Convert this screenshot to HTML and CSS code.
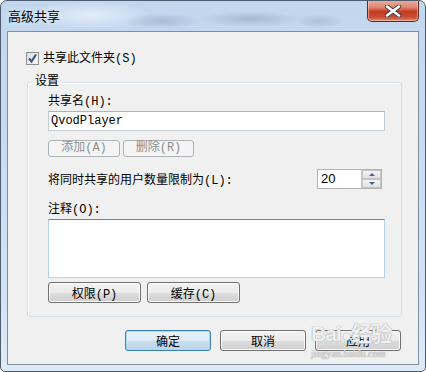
FILE: index.html
```html
<!DOCTYPE html>
<html lang="zh-CN">

<head>
    <meta charset="UTF-8">
    <meta name="viewport" content="width=device-width, initial-scale=1.0">
    <title>高级共享</title>
    <link rel="stylesheet" href="styles.css">
</head>

<body>
    <div class="window">
        <div class="titlebar">
            <span class="title">高级共享</span>
            <button class="close-btn">
                <svg width="22" height="12" viewBox="0 0 22 12">
                    <path d="M5 1.5 L17 10.5 M17 1.5 L5 10.5" stroke="#3b3f47" stroke-width="4.4" stroke-linecap="round" />
                    <path d="M5 1.5 L17 10.5 M17 1.5 L5 10.5" stroke="#ffffff" stroke-width="2.6" stroke-linecap="round" />
                </svg>
            </button>
        </div>

        <div class="content">
            <div class="check-row">
                <span class="checkbox">
                    <svg width="11" height="11" viewBox="0 0 11 11">
                        <path d="M2 5.5 L4.5 8.5 L9 1.5" fill="none" stroke="#3a4f8c" stroke-width="2" />
                    </svg>
                </span>
                <span class="check-label">共享此文件夹(S)</span>
            </div>

            <fieldset class="group">
                <legend>设置</legend>
                <div class="field-label">共享名(H):</div>
                <div class="textbox">QvodPlayer</div>
                <div class="btn-row">
                    <button class="btn btn-small disabled">添加(A)</button>
                    <button class="btn btn-small disabled">删除(R)</button>
                </div>
                <div class="limit-row">
                    <span>将同时共享的用户数量限制为(L):</span>
                    <div class="spin">
                        <span class="spin-value">20</span>
                        <div class="spin-btns">
                            <span class="spin-btn"><i class="arrow-up"></i></span>
                            <span class="spin-btn"><i class="arrow-down"></i></span>
                        </div>
                    </div>
                </div>
                <div class="field-label note-label">注释(O):</div>
                <div class="textarea"></div>
                <div class="btn-row wide">
                    <button class="btn btn-mid">权限(P)</button>
                    <button class="btn btn-mid">缓存(C)</button>
                </div>
            </fieldset>

            <div class="dialog-btns">
                <button class="btn btn-dialog default">确定</button>
                <button class="btn btn-dialog">取消</button>
                <button class="btn btn-dialog">应用</button>
            </div>
        </div>

        <!-- baidu watermark over the corner -->
        <div class="watermark">
            <div class="wm-main">Bai<span class="wm-paw">&#9679;</span>经验</div>
            <div class="wm-url">jingyan.baidu.com</div>
        </div>
    </div>
</body>

</html>
```

FILE: styles.css
```css
body {
    margin: 0;
    background: #ffffff;
    font-family: "Liberation Mono", "Noto Sans CJK SC", monospace;
    font-size: 12px;
    color: #000;
}

.window {
    position: relative;
    width: 426px;
    height: 372px;
    box-sizing: border-box;
    border: 1px solid #4d5c6e;
    border-radius: 7px 7px 5px 5px;
    overflow: hidden;
    background:
        radial-gradient(ellipse 60px 14px at 90px 14px, rgba(255, 255, 255, 0.55), transparent),
        radial-gradient(ellipse 40px 8px at 160px 20px, rgba(120, 140, 170, 0.35), transparent),
        radial-gradient(ellipse 50px 8px at 250px 18px, rgba(110, 125, 150, 0.35), transparent),
        radial-gradient(ellipse 25px 7px at 318px 20px, rgba(120, 135, 160, 0.3), transparent),
        linear-gradient(180deg, #c2d7ee 0%, #c8dbf0 40%, #d3e3f4 80%, #dfeaf7 100%);
}

.titlebar {
    display: flex;
    align-items: flex-start;
    height: 30px;
    padding-left: 7px;
}

.title {
    font-family: "Noto Sans CJK SC", sans-serif;
    font-size: 13px;
    line-height: 14px;
    margin-top: 8px;
    color: #000;
    text-shadow: 0 0 6px rgba(255, 255, 255, 0.9);
}

.close-btn {
    margin-left: auto;
    margin-right: 6px;
    margin-top: -1px;
    width: 52px;
    height: 22px;
    padding: 0;
    border: 1px solid #5d2a22;
    border-top: none;
    border-radius: 0 0 5px 5px;
    background: linear-gradient(180deg, #eab2a4 0%, #dc8670 35%, #c63b22 55%, #c84a30 80%, #dd8a72 100%);
    box-shadow: inset 0 0 0 1px rgba(255, 220, 210, 0.5);
    display: flex;
    align-items: center;
    justify-content: center;
}

.content {
    margin: 0 6px;
    height: 334px;
    box-sizing: border-box;
    border: 1px solid #7d8ea3;
    background: #f0f0f0;
    padding: 20px 16px 0 18px;
}

.check-row {
    display: flex;
    align-items: center;
    height: 13px;
}

.checkbox {
    width: 11px;
    height: 11px;
    border: 1px solid #8e8f8f;
    background: linear-gradient(135deg, #dcdcdc, #f8f8f8);
    display: flex;
    align-items: center;
    justify-content: center;
}

.check-label {
    margin-left: 4px;
    line-height: 14px;
}

.group {
    margin: 10px 0 0 1px;
    padding: 6px 16px 13px 20px;
    border: 1px solid #d5dfe5;
    border-radius: 3px;
    box-shadow: inset 1px 1px 0 #fff;
    min-width: 0;
}

.group legend {
    margin-left: -15px;
    padding: 0 2px;
    line-height: 14px;
}

.field-label {
    line-height: 14px;
}

.textbox {
    margin-top: 2px;
    height: 20px;
    box-sizing: border-box;
    border: 1px solid #c2cbd6;
    border-top-color: #abb3bd;
    background: #fff;
    padding-left: 2px;
    line-height: 18px;
}

.btn-row {
    display: flex;
    gap: 3px;
    margin-top: 9px;
}

.btn-row.wide {
    gap: 6px;
    margin-top: 4px;
}

.btn {
    padding: 0;
    font-family: "Liberation Mono", "Noto Sans CJK SC", monospace;
    font-size: 12px;
    color: #000;
    border: 1px solid #707070;
    border-radius: 3px;
    background: linear-gradient(180deg, #f2f2f2 0%, #ebebeb 50%, #dddddd 51%, #cfcfcf 100%);
    box-shadow: inset 0 0 0 1px #fbfbfb;
}

.btn.disabled {
    color: #8f8f8f;
    border-color: #adb2b5;
    background: #f4f4f4;
    box-shadow: none;
}

.btn-small {
    width: 72px;
    height: 17px;
    line-height: 15px;
}

.btn-small + .btn-small {
    width: 71px;
}

.btn-mid {
    width: 93px;
    height: 21px;
}

.limit-row {
    display: flex;
    align-items: center;
    justify-content: space-between;
    margin-top: 12px;
    height: 20px;
    padding-right: 3px;
}

.spin {
    display: flex;
    width: 65px;
    height: 20px;
    box-sizing: border-box;
    border: 1px solid #b4b4b4;
    background: #fff;
}

.spin-value {
    flex: 1;
    padding-left: 3px;
    line-height: 18px;
    font-family: "Liberation Sans", sans-serif;
    font-size: 13px;
}

.spin-btns {
    width: 19px;
    display: flex;
    flex-direction: column;
    border-left: 1px solid #c8c8c8;
}

.spin-btn {
    flex: 1;
    display: flex;
    align-items: center;
    justify-content: center;
    background: linear-gradient(180deg, #f4f4f4, #e2e2e2);
    border: 1px solid #c4c4c4;
}

.arrow-up,
.arrow-down {
    width: 0;
    height: 0;
    border-left: 3px solid transparent;
    border-right: 3px solid transparent;
}

.arrow-up {
    border-bottom: 3px solid #4b5f9a;
}

.arrow-down {
    border-top: 3px solid #4b5f9a;
}

.note-label {
    margin-top: 14px;
}

.textarea {
    margin-top: 2px;
    height: 59px;
    box-sizing: border-box;
    border: 1px solid #b5d1ea;
    border-top-color: #5f86ad;
    background: #fff;
}

.dialog-btns {
    display: flex;
    justify-content: flex-end;
    gap: 9px;
    margin-top: 13px;
    margin-right: 1px;
}

.btn-dialog {
    width: 86px;
    height: 21px;
    font-family: "Noto Sans CJK SC", sans-serif;
    line-height: 17px;
}

.btn.default {
    border-color: #3c7fb1;
    background: linear-gradient(180deg, #e8f3fb 0%, #dcebf6 50%, #c9deef 51%, #bcd5ea 100%);
    box-shadow: inset 0 0 0 1px #a9dcf7;
}

.watermark {
    position: absolute;
    left: 310px;
    top: 318px;
    pointer-events: none;
    color: rgba(255, 255, 255, 0.85);
    text-shadow: 0 0 1px #a0a0a0, 0 0 1px #a0a0a0;
}

.wm-main {
    font-family: "Liberation Sans", "Noto Sans CJK SC", sans-serif;
    font-weight: bold;
    font-size: 21px;
    line-height: 30px;
    letter-spacing: -1px;
}

.wm-paw {
    font-size: 16px;
    margin: 0 1px;
}

.wm-url {
    font-family: "Liberation Serif", serif;
    font-size: 10px;
    line-height: 10px;
    margin-top: -2px;
    color: rgba(255, 255, 255, 0.6);
}
```
